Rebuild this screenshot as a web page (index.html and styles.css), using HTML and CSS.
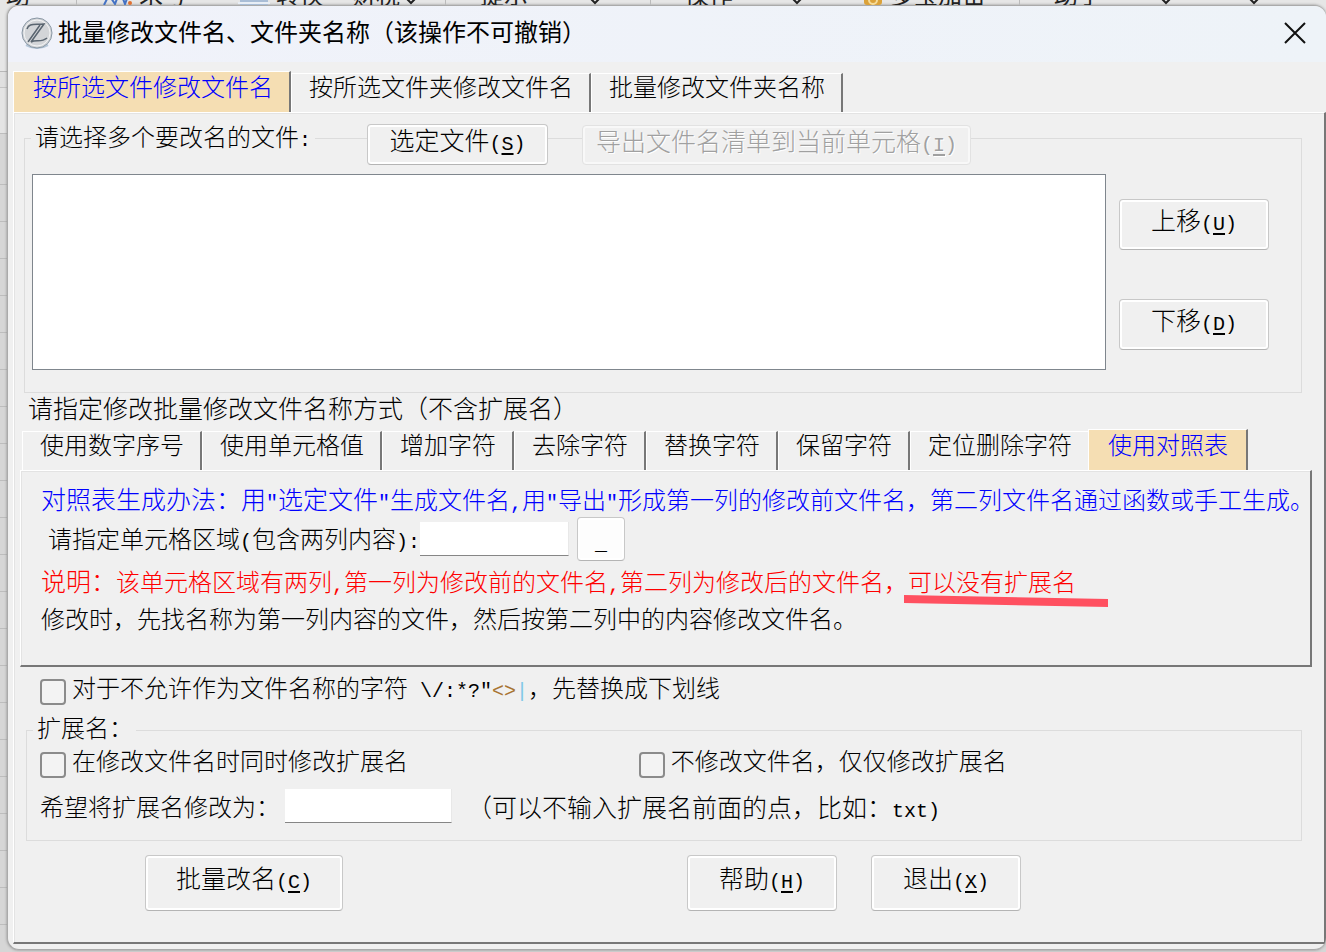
FILE: index.html
```html
<!DOCTYPE html>
<html lang="zh-CN">
<head>
<meta charset="utf-8">
<meta name="viewport" content="width=device-width, initial-scale=1">
<title>批量修改文件名、文件夹名称</title>
<link rel="stylesheet" href="styles.css">
</head>
<body>
<div class="ribbon" aria-hidden="true">
<span class="c1">助</span>
<span class="c2"><svg width="32" height="22" viewBox="0 0 32 22"><path d="M3 22 8 12l6 9 5-13 5 13 3-8" fill="none" stroke="#4472c4" stroke-width="2"/><circle cx="29" cy="20" r="2" fill="#e07030"/></svg>求号</span>
<span class="c3"><svg width="32" height="22" viewBox="0 0 32 22"><path d="M2 10h28v12H2z" fill="#a9bdd6"/><path d="M0 20h32" stroke="#e8eef6" stroke-width="2"/></svg>转换</span>
<span class="c4">财税<svg width="10" height="22" viewBox="0 0 10 22"><path d="m1 16 4 4 4-4" fill="none" stroke="#222" stroke-width="2"/></svg></span>
<span class="c5">提示</span>
<span class="c6"><svg width="10" height="22" viewBox="0 0 10 22"><path d="m1 16 4 4 4-4" fill="none" stroke="#222" stroke-width="2"/></svg></span>
<span class="c7">操作</span>
<span class="c8"><svg width="10" height="22" viewBox="0 0 10 22"><path d="m1 16 4 4 4-4" fill="none" stroke="#222" stroke-width="2"/></svg></span>
<span class="c9"><svg width="18" height="22" viewBox="0 0 18 22"><rect y="6" width="18" height="16" rx="3" fill="#dba23a"/><circle cx="9" cy="17" r="4" fill="none" stroke="#f6dc9a" stroke-width="2"/></svg>多宝加密</span>
<span class="c10">助手</span>
<span class="c11"><svg width="10" height="22" viewBox="0 0 10 22"><path d="m1 16 4 4 4-4" fill="none" stroke="#222" stroke-width="2"/></svg></span>
<span class="c12"><svg width="10" height="22" viewBox="0 0 10 22"><path d="m1 16 4 4 4-4" fill="none" stroke="#222" stroke-width="2"/></svg></span>
</div>
<main class="dialog">
<header class="titlebar">
<svg class="logo" width="32" height="32" viewBox="0 0 32 32" aria-hidden="true">
<path d="M5 28q11 6 22 0" fill="none" stroke="#b4c6d8" stroke-width="2"/>
<circle cx="16" cy="16" r="15" fill="#d3d5d8" stroke="#8997a4" stroke-width="1"/>
<circle cx="16" cy="16" r="13" fill="none" stroke="#f4f5f6" stroke-width="1"/>
<path d="M6 12C8 6 13 8 23 7L10 25c5-3 10 1 16-4M19 8 7 25M10 25 23 7" fill="none" stroke="#5a6570" stroke-width="1.5"/>
</svg>
<h1>批量修改文件名、文件夹名称（该操作不可撤销）</h1>
<button class="close" type="button" aria-label="关闭"><svg width="22" height="22" viewBox="0 0 22 22"><path d="m1 1 20 20M21 1 1 21" stroke="#111" stroke-width="2"/></svg></button>
</header>
<div class="tabs" role="tablist">
<button class="tab here" type="button" role="tab" aria-selected="true">按所选文件修改文件名</button>
<button class="tab" type="button" role="tab">按所选文件夹修改文件名</button>
<button class="tab" type="button" role="tab">批量修改文件夹名称</button>
</div>
<div class="page" role="tabpanel">
<section class="group files">
<div class="grouphead">
<label for="files">请选择多个要改名的文件<span class="en">:</span></label>
<button class="btn pick" type="button">选定文件<span class="en">(<u>S</u>)</span></button>
<button class="btn export" type="button" disabled>导出文件名清单到当前单元格<span class="en">(<u>I</u>)</span></button>
</div>
<div class="filerow">
<select id="files" multiple></select>
<div class="move">
<button class="btn" type="button">上移<span class="en">(<u>U</u>)</span></button>
<button class="btn" type="button">下移<span class="en">(<u>D</u>)</span></button>
</div>
</div>
</section>
<p class="mode wide">请指定修改批量修改文件名称方式（不含扩展名）</p>
<div class="tabs inner" role="tablist">
<button class="tab" type="button" role="tab">使用数字序号</button>
<button class="tab" type="button" role="tab">使用单元格值</button>
<button class="tab" type="button" role="tab">增加字符</button>
<button class="tab" type="button" role="tab">去除字符</button>
<button class="tab" type="button" role="tab">替换字符</button>
<button class="tab" type="button" role="tab">保留字符</button>
<button class="tab last" type="button" role="tab">定位删除字符</button>
<button class="tab here" type="button" role="tab" aria-selected="true">使用对照表</button>
</div>
<div class="page sub" role="tabpanel">
<p class="how"><span class="wide">对照表生成办法：用<span class="en">"</span>选定文件<span class="en">"</span></span>生成文件名<span class="en">,</span>用<span class="en">"</span>导出<span class="en">"</span>形成第一列的修改前文件名，第二列文件名通过函数或手工生成。</p>
<div class="range">
<label for="range">请指定单元格区域<span class="en">(</span>包含两列内容<span class="en">):</span></label>
<input id="range" type="text">
<button class="btn browse" type="button" aria-label="选择区域"><span class="en">_</span></button>
</div>
<p class="note"><span class="wide">说明：</span>该单元格区域有两列<span class="en">,</span>第一列为修改前的文件名<span class="en">,</span>第二列为修改后的文件名，<span class="mark">可以没有扩展名<svg width="204" height="13" viewBox="0 0 204 13" aria-hidden="true"><path d="M0 0 204 4v8L0 8z" fill="#ff5060"/></svg></span></p>
<p class="after">修改时，先找名称为第一列内容的文件，然后按第二列中的内容修改文件名。</p>
</div>
<label class="check legal"><input type="checkbox"><span>对于不允许作为文件名称的字符<span class="en">&nbsp;\/:*?"<span class="amber">&lt;&gt;</span><span class="sky">|</span></span>，先替换成下划线</span></label>
<section class="group ext">
<div class="grouphead"><h2>扩展名：</h2></div>
<div class="checks">
<label class="check"><input type="checkbox"><span>在修改文件名时同时修改扩展名</span></label>
<label class="check"><input type="checkbox"><span>不修改文件名，仅仅修改扩展名</span></label>
</div>
<div class="extrow">
<label for="ext">希望将扩展名修改为：</label>
<input id="ext" type="text">
<span class="wide">（可以不输入扩展名前面的点，比如：<span class="en">txt)</span></span>
</div>
</section>
<footer class="actions">
<button class="btn rename" type="button">批量改名<span class="en">(<u>C</u>)</span></button>
<button class="btn" type="button">帮助<span class="en">(<u>H</u>)</span></button>
<button class="btn" type="button">退出<span class="en">(<u>X</u>)</span></button>
</footer>
</div>
</main>
</body>
</html>
```
FILE: styles.css
```css
*{box-sizing:border-box}
body{margin:0;min-height:100vh;overflow-x:hidden;color:#000;
font-family:"Noto Sans CJK SC",sans-serif;font-size:24px;font-weight:300;line-height:24px;
background:linear-gradient(#e6e6e6 0 71px,#b8b8b8 71px 72px,#e0e0e0 72px 87px,#c4c4c4 87px 88px,#e4e4e4 88px 133px,#bdbdbd 133px 134px,#d6d6d6 134px 160px,transparent 160px),
repeating-linear-gradient(#d6d6d6 0 36px,#bdbdbd 36px 37px)}
p,h1,h2{margin:0;font-size:24px;font-weight:300}
p{white-space:nowrap}
button,input,select{font:inherit;color:inherit;margin:0;padding:0}
.en{font-family:"Liberation Mono","Noto Sans CJK SC",monospace;font-size:20px;font-weight:400;line-height:0}
.wide{font-size:25px}

/* strip of the spreadsheet toolbar behind the dialog */
.ribbon{display:grid;grid-template-columns:76px 162px 108px 99px 139px 66px 108px 74px 187px 108px 90px 1fr;
grid-template-rows:22px;align-content:end;
height:5px;overflow:hidden;background:#e6e6e6;color:#222;font-size:24px;line-height:22px;font-weight:400}
.ribbon span{display:flex;white-space:nowrap;padding-left:6px}
.ribbon svg{flex:none}
.ribbon .c2{padding-left:24px;gap:6px;border-left:1px solid #bbb}
.ribbon .c3{padding-left:0;gap:6px}
.ribbon .c4{gap:6px}
.ribbon .c5{padding-left:34px;border-left:1px solid #bbb}
.ribbon .c7{padding-left:34px;border-left:1px solid #bbb}
.ribbon .c8{padding-left:34px}
.ribbon .c9{padding-left:32px;gap:8px}
.ribbon .c10{padding-left:34px;border-left:1px solid #bbb}
.ribbon .c11{padding-left:34px}
.ribbon .c12{padding-left:32px}

.dialog{margin-left:7px;margin-bottom:2px;padding:0 0 5px 5px;border:1px solid #aaa;border-right-width:0;border-radius:12px;
overflow:hidden;background:#f0f0f0;box-shadow:0 0 3px #888}
.titlebar{display:flex;align-items:center;height:56px;margin:0 0 9px -5px;padding:0 20px 2px 13px;
background:linear-gradient(90deg,#f0f2fa,#eef3f8)}
.titlebar h1{flex:1;margin-left:5px;padding-bottom:4px;font-weight:400}
.close{display:flex;border:0;background:none}

.tabs{display:flex;align-items:flex-end;height:41px;padding-left:2px}
.tab{height:39px;padding:0 16px 14px 17px;line-height:24px;white-space:nowrap;background:#f0f0f0;
border:solid;border-width:1px 2px 0 1px;border-color:#fff #777 #fff #fff}
.last{border-right-color:#f0f0f0}
.here{height:41px;margin:0 -2px;padding:2px 18px 14px 19px;color:#00f;background:#f5deb3}
.tabs .here:first-child{margin-right:0;padding-right:16px}
.page{border:solid;border-width:1px 2px 2px 1px;border-color:#fff #777 #777 #fff;box-shadow:inset 1px 1px #e3e3e3;padding:25px 22px 31px 10px}

.btn{height:56px;padding:0 0 12px;border:1px solid #c8c8c8;border-bottom-color:#b4b4b4;border-radius:4px;
background:#f0f0f0;box-shadow:inset 0 0 0 2px #fff;font-size:25px;line-height:26px;white-space:nowrap}
.btn:disabled{color:#a0a0a0;border-color:#e2e2e2;box-shadow:inset 0 0 0 2px #f8f8f8;text-shadow:1px 1px #fff}
.btn u{text-underline-offset:3px}

.group{border:1px solid #dcdcdc}
.grouphead{display:flex;align-items:flex-start}
.grouphead label,.grouphead h2{padding:0 4px;background:#f0f0f0;white-space:nowrap}
.files{padding-bottom:22px}
.files .grouphead{margin:-15px 0 9px 6px}
.pick{width:181px;height:41px;margin-left:52px}
.export{width:389px;height:40px;margin:1px 0 0 34px;padding-bottom:10px}
.filerow{display:flex;gap:13px;padding:0 32px 0 7px}
#files{flex:1;min-width:0;height:196px;border:1px solid #7f868d;border-radius:0;background:#fff;outline:0}
.move{display:flex;flex-direction:column;gap:49px;width:150px;padding-top:25px}
.move .btn{height:51px}

.mode{margin:2px 0 10px 4px}
.inner{margin-left:-4px}
.sub{margin:0 -10px 8px -4px;padding:15px 0 35px 20px}
.how{color:#00f}
.note{color:#f00;margin:7px 0 13px}
.range{display:flex;align-items:center;margin-top:6px;padding-left:7px}
.range label{padding-bottom:2px}
input[type=text]{width:149px;height:34px;border:0;border-right:1px solid #e8e8e8;border-bottom:1px solid #868686;border-radius:0;background:#fff}
.browse{width:48px;height:44px;margin-left:8px;padding:0;background:#fdfdfd}
.mark{position:relative}
.mark svg{position:absolute;left:-4px;top:32px}

.check{display:flex;align-items:flex-start;gap:6px;white-space:nowrap}
.check input{appearance:none;flex:none;width:26px;height:26px;margin-top:4px;border:2px solid #8b8b8b;border-radius:4px;background:#f3f3f3}
.legal{margin:0 0 25px 16px}
.amber{color:#a87432}
.sky{color:#82c8e8}
.ext{margin-left:2px;padding:0 26px 17px 13px}
.ext .grouphead{margin:-16px 0 9px -7px}
.ext h2{padding-right:3px}
.checks{display:grid;grid-template-columns:16fr 17fr}
.extrow{display:flex;align-items:center;margin-top:11px;white-space:nowrap}
#ext{width:167px;margin:0 15px 0 5px}
.actions{display:flex;gap:34px;margin:14px 0 0 121px}
.actions .btn{width:150px}
.actions .rename{width:198px;margin-right:310px}
```
